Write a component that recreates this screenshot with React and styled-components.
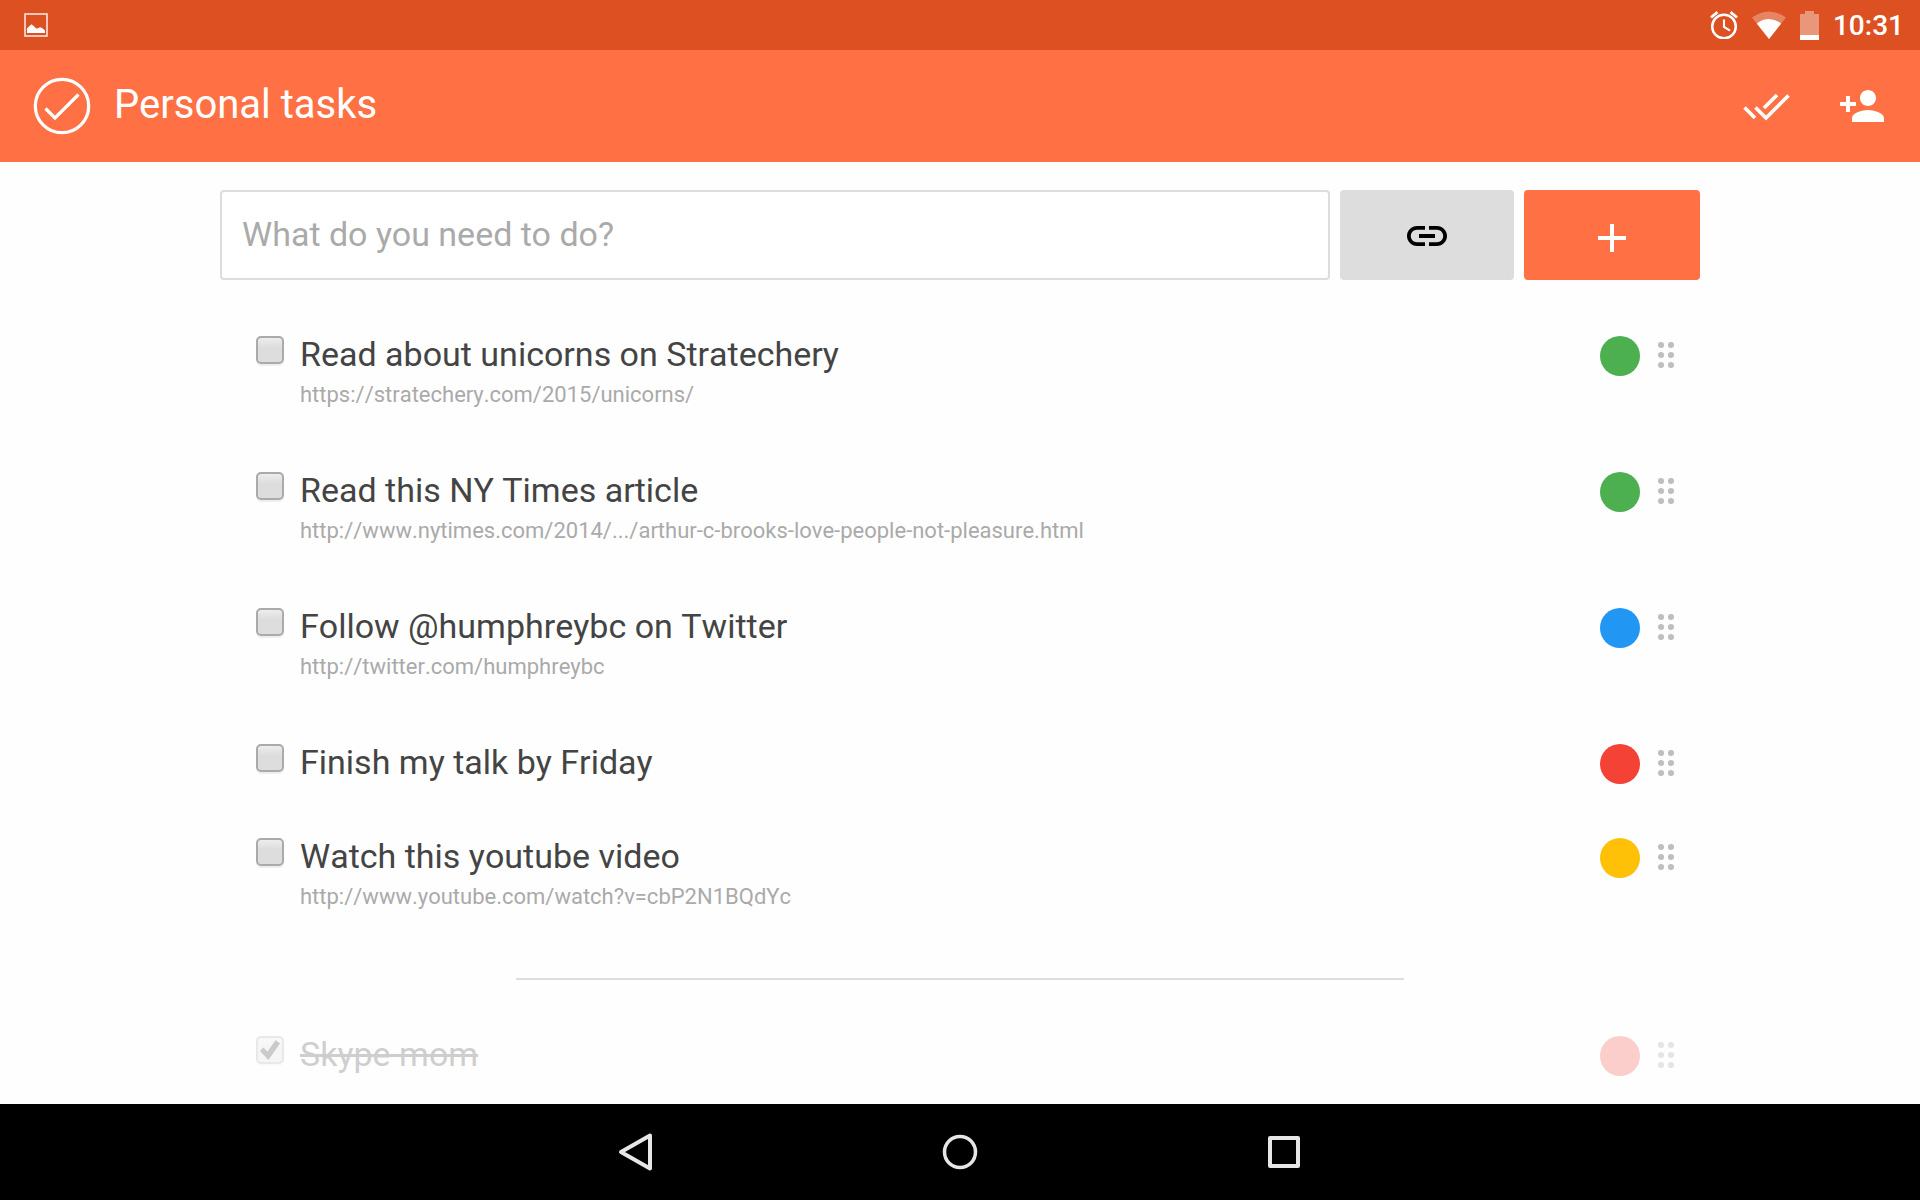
import React, { useState } from "react";
import styled, { createGlobalStyle } from "styled-components";

const GlobalStyle = createGlobalStyle`
  *, *::before, *::after { box-sizing: border-box; }
  body {
    margin: 0;
    background: #fefefe;
    color: #444;
    font-family: Roboto, "Liberation Sans", sans-serif;
  }
  button, input { font: inherit; }
  svg { display: block; }
`;

const Screen = styled.div`
  display: flex;
  flex-direction: column;
  height: 100vh;
`;

const StatusBar = styled.div`
  display: flex;
  justify-content: space-between;
  align-items: center;
  flex: none;
  height: 50px;
  padding: 0 16px 0 24px;
  background: #dd5022;
  color: #fff;
`;

const StatusIcons = styled.div`
  display: flex;
  align-items: center;
  gap: 14px;
`;

const Clock = styled.time`
  padding-top: 2px;
  font-size: 28px;
  font-weight: 500;
  line-height: 32px;
`;

const AppBar = styled.header`
  display: flex;
  align-items: center;
  flex: none;
  height: 112px;
  padding: 0 34px 0 32px;
  gap: 22px;
  background: #ff7144;
  color: #fff;
`;

const AppTitle = styled.h1`
  flex: 1;
  margin: 0;
  padding-bottom: 2px;
  font-size: 40px;
  font-weight: 400;
  line-height: 48px;
`;

const Actions = styled.div`
  display: flex;
  gap: 48px;
`;

const IconButton = styled.button`
  display: grid;
  place-items: center;
  width: 48px;
  height: 48px;
  padding: 0;
  border: 0;
  background: none;
  color: inherit;
  cursor: pointer;
`;

const Content = styled.main`
  flex: 1;
  min-height: 0;
  overflow-y: auto;
  padding: 28px 40px;
`;

const Column = styled.div`
  max-width: 1480px;
  margin: 0 auto;
`;

const AddForm = styled.form`
  display: flex;
  gap: 10px;
  height: 90px;
`;

const TaskInput = styled.input`
  flex: 1;
  min-width: 0;
  padding: 0 20px 2px;
  border: 2px solid #ddd;
  border-radius: 4px;
  background: #fff;
  color: #444;
  font-size: 34px;
  &::placeholder { color: #aaa; opacity: 1; }
`;

const FormButton = styled.button`
  display: grid;
  place-items: center;
  flex: 0 0 ${(p) => (p.$primary ? 176 : 174)}px;
  padding: 2px 0 0;
  border: 0;
  border-radius: 4px;
  background: ${(p) => (p.$primary ? "#ff7144" : "#ddd")};
  color: ${(p) => (p.$primary ? "#fff" : "#000")};
  cursor: pointer;
`;

const TaskList = styled.ul`
  display: flex;
  flex-direction: column;
  gap: 54px;
  margin: 56px 0 0;
  padding: 0 26px 0 36px;
  list-style: none;
  font-kerning: none;
`;

const TaskRow = styled.li`
  display: flex;
  align-items: flex-start;
  opacity: ${(p) => (p.$done ? 0.25 : 1)};
`;

const Tick = styled.input`
  appearance: none;
  flex: none;
  display: grid;
  width: 28px;
  height: 28px;
  margin: 0 16px 0 0;
  border: 2px solid #aaa;
  border-radius: 5px;
  background: linear-gradient(#ededed, #ddd 40%);
  box-shadow: 0 2px 0 #eee;
  &:checked::after {
    content: "";
    width: 20px;
    height: 20px;
    margin: 2px;
    background: #333;
    clip-path: polygon(0 55%, 17% 38%, 37% 59%, 78% 0, 100% 17%, 42% 100%);
  }
`;

const TaskText = styled.div`
  flex: 1;
  min-width: 0;
`;

const TaskTitle = styled.label`
  display: block;
  width: fit-content;
  font-size: 34px;
  line-height: 36px;
  text-decoration: ${(p) => (p.$done ? "line-through" : "none")};
`;

const TaskLink = styled.a`
  display: block;
  width: fit-content;
  padding: 10px 0;
  color: #aaa;
  font-size: 22px;
  line-height: 26px;
  text-decoration: none;
`;

const colors = { green: "#4caf50", blue: "#2196f3", red: "#f44336", amber: "#ffc107" };

const Label = styled.button`
  flex: none;
  width: 40px;
  height: 40px;
  padding: 0;
  border: 0;
  border-radius: 50%;
  background: ${(p) => colors[p.$color]};
  cursor: pointer;
`;

const Handle = styled.button`
  flex: none;
  padding: 6px 0;
  margin-left: 18px;
  border: 0;
  background: none;
  color: ${(p) => (p.$done ? "#9e9e9e" : "#bfbfbf")};
  cursor: grab;
`;

const Divider = styled.hr`
  width: 60%;
  height: 2px;
  margin: 58px auto 56px;
  border: 0;
  background: #ddd;
`;

const DoneList = styled(TaskList)`
  margin: 0;
`;

const NavBar = styled.nav`
  display: flex;
  justify-content: center;
  align-items: center;
  flex: none;
  gap: 276px;
  height: 96px;
  background: #000;
  color: #e6e6e6;
`;

const PictureIcon = () => (
  <svg width="24" height="24" viewBox="0 0 24 24" fill="none" aria-hidden="true">
    <rect x="1" y="1" width="22" height="22" stroke="#fff" strokeOpacity=".85" strokeWidth="1.6" />
    <path d="M3 20v-4.500l2-2 2.500-2.300 3 2.500 2 2 3.500-1.500 2 .8 3 2.500v2.500z" fill="#fff" />
  </svg>
);

const AlarmIcon = () => (
  <svg width="28" height="28" viewBox="0 0 28 28" fill="none" stroke="#fff" aria-hidden="true">
    <circle cx="14" cy="15.500" r="11.800" strokeWidth="2.500" />
    <path d="M14 8.500v7.500l6 3.600" strokeWidth="2.100" />
    <path d="M1 6.500L7.500 1.200M27 6.500L20.500 1.200" strokeWidth="2.800" />
  </svg>
);

const WifiIcon = () => (
  <svg width="34" height="28" viewBox="1 0 34 28" fill="#fff" aria-hidden="true">
    <path d="M1 6.500Q18-5.500 35 6.500L18 28z" opacity=".3" />
    <path d="M5.800 12.400Q18 3.600 30.200 12.400L18 28z" />
  </svg>
);

const BatteryIcon = () => (
  <svg width="19" height="29" viewBox="0 0 19 29" fill="#fff" aria-hidden="true">
    <path d="M0 3h5V0h9v3h5v21H0z" opacity=".4" />
    <path d="M0 24h19v5H0z" />
  </svg>
);

const LogoIcon = () => (
  <svg width="60" height="60" viewBox="0 0 60 60" fill="none" stroke="#fff" strokeWidth="3.200" aria-hidden="true">
    <circle cx="30" cy="30" r="26.700" />
    <path d="M13.500 32.500L23 42 46.500 18.500" />
  </svg>
);

const DoneAllIcon = () => (
  <svg width="48" height="48" viewBox="0 0 48 48" fill="none" stroke="#fff" strokeWidth="3.600" aria-hidden="true">
    <path d="M2.500 25.500L13 36M13.500 25.500L24 36 46.500 13.500M22 26L35 13" />
  </svg>
);

const PersonAddIcon = () => (
  <svg width="48" height="48" viewBox="0 0 24 24" fill="#fff" aria-hidden="true">
    <path d="M15 12c2.210 0 4-1.790 4-4s-1.790-4-4-4-4 1.790-4 4 1.790 4 4 4zm-9-2V7H4v3H1v2h3v3h2v-3h3v-2H6zm9 4c-2.670 0-8 1.340-8 4v2h16v-2c0-2.660-5.330-4-8-4z" />
  </svg>
);

const LinkIcon = () => (
  <svg width="48" height="48" viewBox="0 0 24 24" fill="currentColor" aria-hidden="true">
    <path d="M3.900 12c0-1.710 1.390-3.100 3.100-3.100h4V7H7c-2.760 0-5 2.240-5 5s2.240 5 5 5h4v-1.900H7c-1.710 0-3.100-1.390-3.100-3.100zM8 13h8v-2H8v2zm9-6h-4v1.900h4c1.710 0 3.100 1.390 3.100 3.100s-1.390 3.100-3.100 3.100h-4V17h4c2.760 0 5-2.240 5-5s-2.240-5-5-5z" />
  </svg>
);

const PlusIcon = () => (
  <svg width="48" height="48" viewBox="0 0 48 48" fill="currentColor" aria-hidden="true">
    <path d="M38 28H26v12h-4V28H10v-4h12V12h4v12h12z" />
  </svg>
);

const DotsIcon = () => (
  <svg width="16" height="26" viewBox="0 0 16 26" fill="currentColor" aria-hidden="true">
    {[3, 13, 23].map((y) => (
      <g key={y}>
        <circle cx="3" cy={y} r="3.100" />
        <circle cx="13" cy={y} r="3.100" />
      </g>
    ))}
  </svg>
);

const NavIcon = ({ children }) => (
  <svg width="48" height="48" viewBox="0 0 48 48" fill="none" stroke="currentColor" strokeLinejoin="round" aria-hidden="true">
    {children}
  </svg>
);

const initialTasks = [
  { id: "t1", title: "Read about unicorns on Stratechery", url: "https://stratechery.com/2015/unicorns/", color: "green" },
  { id: "t2", title: "Read this NY Times article", url: "http://www.nytimes.com/2014/.../arthur-c-brooks-love-people-not-pleasure.html", color: "green" },
  { id: "t3", title: "Follow @humphreybc on Twitter", url: "http://twitter.com/humphreybc", color: "blue" },
  { id: "t4", title: "Finish my talk by Friday", color: "red" },
  { id: "t5", title: "Watch this youtube video", url: "http://www.youtube.com/watch?v=cbP2N1BQdYc", color: "amber" },
  { id: "t6", title: "Skype mom", color: "red", done: true },
];

function Task({ task, onToggle }) {
  return (
    <TaskRow $done={task.done}>
      <Tick id={task.id} type="checkbox" checked={!!task.done} onChange={() => onToggle(task.id)} />
      <TaskText>
        <TaskTitle htmlFor={task.id} $done={task.done}>{task.title}</TaskTitle>
        {task.url && <TaskLink href={task.url}>{task.url}</TaskLink>}
      </TaskText>
      <Label type="button" $color={task.color} aria-label="Change label" />
      <Handle type="button" $done={task.done} aria-label="Reorder task"><DotsIcon /></Handle>
    </TaskRow>
  );
}

export default function App() {
  const [tasks, setTasks] = useState(initialTasks);
  const [draft, setDraft] = useState("");
  const toggle = (id) =>
    setTasks((list) => list.map((t) => (t.id === id ? { ...t, done: !t.done } : t)));
  const add = (event) => {
    event.preventDefault();
    if (!draft.trim()) return;
    setTasks((list) => [{ id: `t${list.length + 1}`, title: draft.trim(), color: "green" }, ...list]);
    setDraft("");
  };

  return (
    <>
      <GlobalStyle />
      <Screen>
        <StatusBar>
          <PictureIcon />
          <StatusIcons>
            <AlarmIcon />
            <WifiIcon />
            <BatteryIcon />
            <Clock>10:31</Clock>
          </StatusIcons>
        </StatusBar>
        <AppBar>
          <LogoIcon />
          <AppTitle>Personal tasks</AppTitle>
          <Actions>
            <IconButton type="button" aria-label="Complete all"><DoneAllIcon /></IconButton>
            <IconButton type="button" aria-label="Share list"><PersonAddIcon /></IconButton>
          </Actions>
        </AppBar>
        <Content>
          <Column>
            <AddForm onSubmit={add}>
              <TaskInput
                type="text"
                aria-label="New task"
                placeholder="What do you need to do?"
                value={draft}
                onChange={(e) => setDraft(e.target.value)}
              />
              <FormButton type="button" aria-label="Add link"><LinkIcon /></FormButton>
              <FormButton $primary type="submit" aria-label="Add task"><PlusIcon /></FormButton>
            </AddForm>
            <TaskList>
              {tasks.filter((t) => !t.done).map((t) => <Task key={t.id} task={t} onToggle={toggle} />)}
            </TaskList>
            <Divider />
            <DoneList>
              {tasks.filter((t) => t.done).map((t) => <Task key={t.id} task={t} onToggle={toggle} />)}
            </DoneList>
          </Column>
        </Content>
        <NavBar>
          <IconButton type="button" aria-label="Back">
            <NavIcon><path d="M9 24L38 7.500v33z" strokeWidth="4" /></NavIcon>
          </IconButton>
          <IconButton type="button" aria-label="Home">
            <NavIcon><circle cx="24" cy="24" r="15.500" strokeWidth="3.500" /></NavIcon>
          </IconButton>
          <IconButton type="button" aria-label="Recent apps">
            <NavIcon><path d="M10 10h28v28H10z" strokeWidth="4" /></NavIcon>
          </IconButton>
        </NavBar>
      </Screen>
    </>
  );
}
